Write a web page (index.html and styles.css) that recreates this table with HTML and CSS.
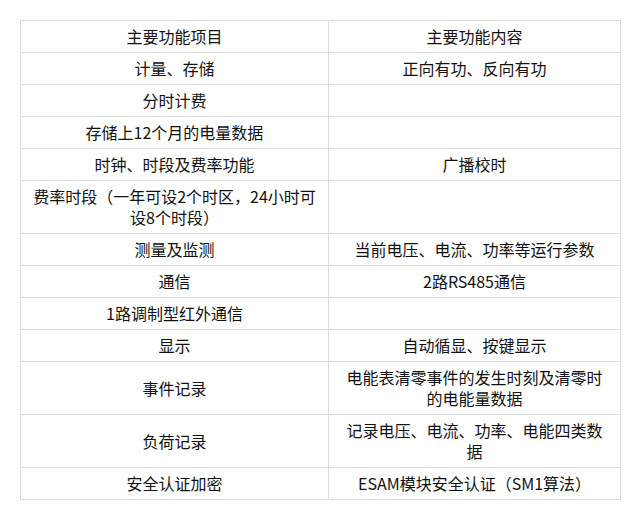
FILE: index.html
```html
<!DOCTYPE html>
<html lang="zh-CN">
<head>
<meta charset="utf-8">
<link rel="stylesheet" href="styles.css">
</head>
<body>
<table class="spec">
  <colgroup><col class="c1"><col class="c2"></colgroup>
  <tbody>
    <tr><td>主要功能项目</td><td>主要功能内容</td></tr>
    <tr><td>计量、存储</td><td>正向有功、反向有功</td></tr>
    <tr><td>分时计费</td><td></td></tr>
    <tr><td>存储上12个月的电量数据</td><td></td></tr>
    <tr><td>时钟、时段及费率功能</td><td>广播校时</td></tr>
    <tr><td>费率时段（一年可设2个时区，24小时可设8个时段）</td><td></td></tr>
    <tr><td>测量及监测</td><td>当前电压、电流、功率等运行参数</td></tr>
    <tr><td>通信</td><td>2路RS485通信</td></tr>
    <tr><td>1路调制型红外通信</td><td></td></tr>
    <tr><td>显示</td><td>自动循显、按键显示</td></tr>
    <tr><td>事件记录</td><td>电能表清零事件的发生时刻及清零时的电能量数据</td></tr>
    <tr><td>负荷记录</td><td>记录电压、电流、功率、电能四类数据</td></tr>
    <tr><td>安全认证加密</td><td>ESAM模块安全认证（SM1算法）</td></tr>
  </tbody>
</table>
</body>
</html>
```
FILE: styles.css
```css
html, body {
  margin: 0;
  padding: 0;
  background: #fff;
}
body {
  padding: 20px;
  font-family: "Noto Sans CJK SC", "Noto Sans", sans-serif;
  font-size: 16px;
  color: #111;
}
.spec {
  border-collapse: collapse;
  table-layout: fixed;
  width: 600px;
}
.c1 { width: 308px; }
.c2 { width: 292px; }
.spec td {
  border: 1px solid #dcdcdc;
  padding: 5px 10px;
  line-height: 21px;
  height: 21px;
  text-align: center;
  vertical-align: middle;
  word-break: break-all;
}
```
